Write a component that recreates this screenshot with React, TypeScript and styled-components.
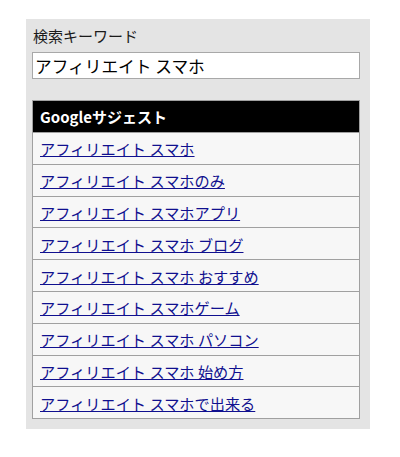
import { FC } from 'react';
import styled, { createGlobalStyle } from 'styled-components';

const suggestions = [
  'アフィリエイト スマホ',
  'アフィリエイト スマホのみ',
  'アフィリエイト スマホアプリ',
  'アフィリエイト スマホ ブログ',
  'アフィリエイト スマホ おすすめ',
  'アフィリエイト スマホゲーム',
  'アフィリエイト スマホ パソコン',
  'アフィリエイト スマホ 始め方',
  'アフィリエイト スマホで出来る',
];

const App: FC = () => {
  return (
    <>
      <GlobalStyle />
      <Panel>
        <Label htmlFor="keyword">検索キーワード</Label>
        <KeywordInput id="keyword" defaultValue="アフィリエイト スマホ" />
        <SuggestTable>
          <SuggestHeader>Googleサジェスト</SuggestHeader>
          {suggestions.map((word) => (
            <SuggestRow key={word}>
              <a href="#">{word}</a>
            </SuggestRow>
          ))}
        </SuggestTable>
      </Panel>
    </>
  );
};

export default App;

const GlobalStyle = createGlobalStyle`
  body {
    margin: 0;
    background: #ffffff;
    font-family: 'Noto Sans CJK JP', 'Noto Sans', sans-serif;
    color: #111;
  }
`;

const Panel = styled.div`
  box-sizing: border-box;
  margin: 19px 0 0 26px;
  width: 344px;
  height: 410px;
  padding: 7px 10px 0 6px;
  background-color: #e4e4e4;
  display: flex;
  flex-direction: column;
`;

const Label = styled.label`
  font-size: 15px;
  line-height: 20px;
  padding-left: 1px;
  color: #1a1a1a;
`;

const KeywordInput = styled.input`
  box-sizing: border-box;
  margin-top: 6px;
  width: 328px;
  height: 27px;
  padding: 0 2px;
  border: 1px solid #a8a8a8;
  background: #fff;
  font-family: inherit;
  font-size: 16.7px;
  color: #000;
  outline: none;
`;

const SuggestTable = styled.div`
  margin-top: 21px;
  width: 328px;
  border: 1px solid #a0a0a0;
  box-sizing: border-box;
`;

const SuggestHeader = styled.div`
  height: 31px;
  display: flex;
  align-items: center;
  padding: 0 7px;
  background-color: #000;
  color: #fff;
  font-size: 15px;
  font-weight: 700;
`;

const SuggestRow = styled.div`
  box-sizing: border-box;
  height: 31.8px;
  display: flex;
  align-items: center;
  padding: 0 7px;
  border-top: 1px solid #a0a0a0;
  background-color: #f7f7f7;
  font-size: 15.2px;
  a {
    color: #10108f;
    text-decoration: underline;
    text-underline-offset: 1px;
  }
`;
